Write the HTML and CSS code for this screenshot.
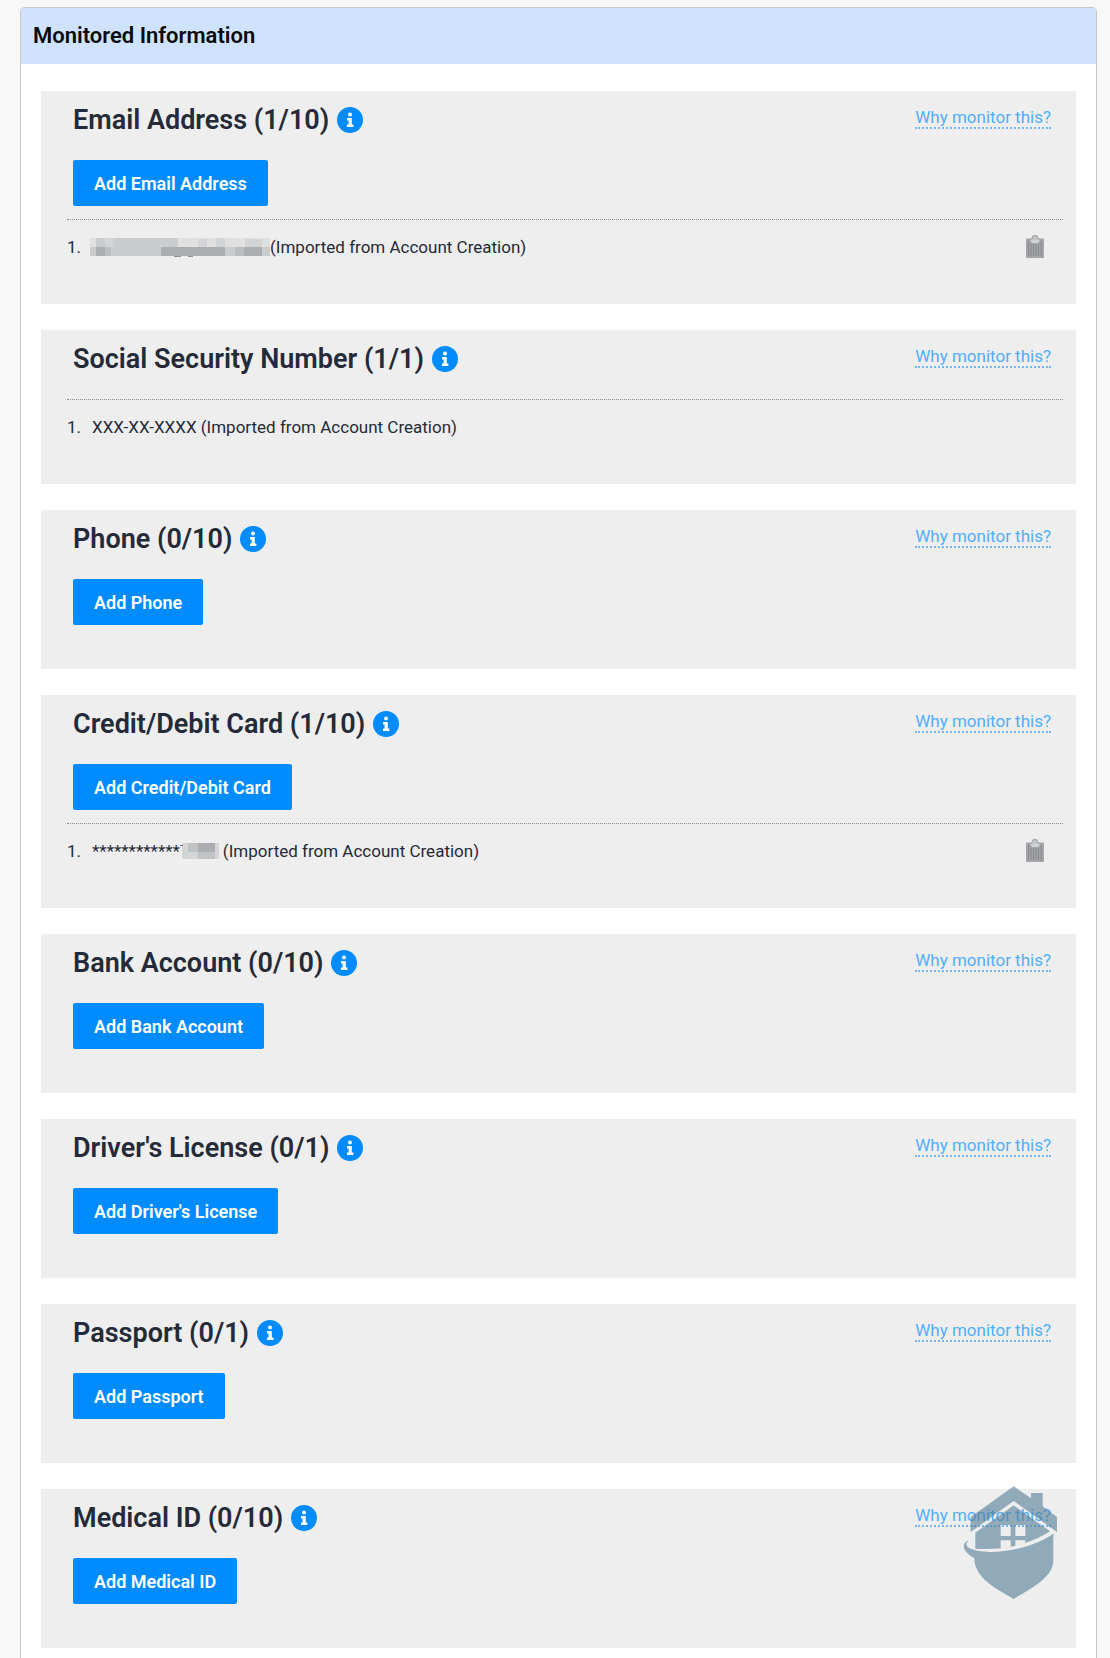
FILE: index.html
```html
<!DOCTYPE html>
<html lang="en">
<head>
    <meta charset="UTF-8">
    <meta name="viewport" content="width=device-width, initial-scale=1.0">
    <title>Monitored Information</title>
    <link rel="stylesheet" href="styles.css">
</head>
<body>
    <svg class="sprite" aria-hidden="true">
        <symbol id="icon-info" viewBox="0 0 26 26">
            <circle cx="13" cy="13" r="13" fill="#008cff"/>
            <circle cx="13" cy="7.6" r="2" fill="#fff"/>
            <path d="M10 11h4.8v6.6h1.6v2.4H10v-2.4h1.6v-4.2H10z" fill="#fff"/>
        </symbol>
        <symbol id="icon-trash" viewBox="0 0 18 24">
            <path d="M1 3.500h16a1 1 0 0 1 1 1V22a1 1 0 0 1-1 1H1a1 1 0 0 1-1-1V4.500a1 1 0 0 1 1-1z" fill="#a3a5a8"/>
            <path d="M2.500 6v15M5 9v12M7.500 9v12M10 9v12M12.500 9v12M15.200 6v15" stroke="#86888c" stroke-width="1"/>
            <path d="M5 5C5 3.500 6.500 3.500 6.500 2.500a2.500 2 0 0 1 5 0c0 1 1.500 1 1.500 2.500" fill="#c4c5c7" stroke="#a9abad" stroke-width="1.500"/>
            <path d="M4.500 5h9v1.500l-2 1.500h-5l-2-1.500z" fill="#d2d3d4"/>
        </symbol>
    </svg>

    <main class="panel">
        <h1 class="panel-title">Monitored Information</h1>
        <div class="panel-body">
            <section class="card">
                <div class="card-head">
                    <h2>Email Address (1/10)</h2>
                    <button class="info" aria-label="About email address"><svg><use href="#icon-info"/></svg></button>
                    <a href="#" class="why">Why monitor this?</a>
                </div>
                <button class="add">Add Email Address</button>
                <ul class="items">
                    <li>
                        <span class="num">1.</span>
                        <svg class="mask mask-email" viewBox="0 0 180 21" aria-hidden="true">
                            <path d="M0 1h180v18H0z" fill="#e0e0e1"/>
                            <path d="M6 1h9v9H6zM24 1h64v18H24zM0 10h24v9H0zM135 10h45v9h-45z" fill="#cbccce"/>
                            <path d="M15 1h9v9h-9zM108 2h9v8h-9zM126 1h9v9h-9zM155 2h17v8h-17z" fill="#d3d4d5"/>
                            <path d="M6 10h9v9H6zM71 10h64v9H71zM154 10h18v9h-18z" fill="#abadb0"/>
                            <path d="M15 10h6v9h-6zM145 10h9v9h-9z" fill="#bbbdbf"/>
                            <path d="M84 19h7v1h-7zM98 19h5v1h-5z" fill="#8d9095"/>
                        </svg>
                        <span>(Imported from Account Creation)</span>
                        <button class="trash" aria-label="Remove"><svg><use href="#icon-trash"/></svg></button>
                    </li>
                </ul>
            </section>

            <section class="card">
                <div class="card-head">
                    <h2>Social Security Number (1/1)</h2>
                    <button class="info" aria-label="About social security number"><svg><use href="#icon-info"/></svg></button>
                    <a href="#" class="why">Why monitor this?</a>
                </div>
                <ul class="items">
                    <li>
                        <span class="num">1.</span>
                        <span>XXX-XX-XXXX (Imported from Account Creation)</span>
                    </li>
                </ul>
            </section>

            <section class="card">
                <div class="card-head">
                    <h2>Phone (0/10)</h2>
                    <button class="info" aria-label="About phone"><svg><use href="#icon-info"/></svg></button>
                    <a href="#" class="why">Why monitor this?</a>
                </div>
                <button class="add">Add Phone</button>
            </section>

            <section class="card">
                <div class="card-head">
                    <h2>Credit/Debit Card (1/10)</h2>
                    <button class="info" aria-label="About credit or debit card"><svg><use href="#icon-info"/></svg></button>
                    <a href="#" class="why">Why monitor this?</a>
                </div>
                <button class="add">Add Credit/Debit Card</button>
                <ul class="items">
                    <li>
                        <span class="num">1.</span>
                        <span>************</span>
                        <svg class="mask mask-card" viewBox="0 0 40 20" aria-hidden="true">
                            <path d="M2 2h37v16H2z" fill="#d4d5d6"/>
                            <path d="M8 2h10v9H8zM18 11h17v7H18z" fill="#c1c2c4"/>
                            <path d="M18 2h17v9H18z" fill="#acadb0"/>
                            <path d="M0 4h3v1H0z" fill="#666a72"/>
                        </svg>
                        <span>(Imported from Account Creation)</span>
                        <button class="trash" aria-label="Remove"><svg><use href="#icon-trash"/></svg></button>
                    </li>
                </ul>
            </section>

            <section class="card">
                <div class="card-head">
                    <h2>Bank Account (0/10)</h2>
                    <button class="info" aria-label="About bank account"><svg><use href="#icon-info"/></svg></button>
                    <a href="#" class="why">Why monitor this?</a>
                </div>
                <button class="add">Add Bank Account</button>
            </section>

            <section class="card">
                <div class="card-head">
                    <h2>Driver's License (0/1)</h2>
                    <button class="info" aria-label="About driver's license"><svg><use href="#icon-info"/></svg></button>
                    <a href="#" class="why">Why monitor this?</a>
                </div>
                <button class="add">Add Driver's License</button>
            </section>

            <section class="card">
                <div class="card-head">
                    <h2>Passport (0/1)</h2>
                    <button class="info" aria-label="About passport"><svg><use href="#icon-info"/></svg></button>
                    <a href="#" class="why">Why monitor this?</a>
                </div>
                <button class="add">Add Passport</button>
            </section>

            <section class="card">
                <div class="card-head">
                    <h2>Medical ID (0/10)</h2>
                    <button class="info" aria-label="About medical ID"><svg><use href="#icon-info"/></svg></button>
                    <a href="#" class="why">Why monitor this?</a>
                </div>
                <button class="add">Add Medical ID</button>
                <svg class="watermark" viewBox="70 48 282 339" aria-hidden="true">
                    <path d="M222 49L274 85V69H309V109L352 141V186L222 93L93 186V141Z"/>
                    <path fill-rule="evenodd" d="M222 106L331 184C300 204 262 220 225 228C190 236 150 239 107 236V188ZM183 165V198H213V165ZM227 165V198H257V165ZM183 211V235L213 231V211ZM227 211V228L257 219V211Z"/>
                    <path d="M88 210C68 228 86 243 150 246C225 246 300 220 341 191V270C341 325 270 357 222 387C172 357 104 325 104 264C72 248 60 222 88 210Z"/>
                </svg>
            </section>
        </div>
    </main>
</body>
</html>
```

FILE: styles.css
```css
* {
    box-sizing: border-box;
}

body {
    margin: 0;
    padding: 7px 13px 0 20px;
    background: #f8f8f8;
    color: #252a38;
    font-family: Roboto, sans-serif;
    font-size: 17px;
}

h1, h2, ul {
    margin: 0;
    padding: 0;
}

button {
    border: none;
    padding: 0;
    font-family: inherit;
    cursor: pointer;
}

.sprite {
    display: none;
}

.panel {
    background: #fff;
    border: 1px solid #c8c8c8;
    border-bottom: none;
    border-radius: 5px 5px 0 0;
    overflow: hidden;
}

.panel-title {
    padding: 0 12px;
    background: #cfe3ff;
    color: #0a0a0a;
    font-size: 22px;
    font-weight: 600;
    line-height: 56px;
}

.panel-body {
    display: flex;
    flex-direction: column;
    gap: 26px;
    padding: 27px 20px 12px;
}

.card {
    position: relative;
    padding: 13px 13px 44px 26px;
    background: #eee;
}

.card-head {
    display: flex;
    align-items: center;
    gap: 8px;
    height: 32px;
    padding-left: 6px;
}

.card-head h2 {
    font-size: 27px;
    font-weight: 600;
    line-height: 32px;
}

.info {
    width: 26px;
    height: 26px;
    border-radius: 50%;
    background: none;
}

.info svg, .trash svg {
    display: block;
    width: 100%;
    height: 100%;
}

.why {
    align-self: flex-start;
    margin-left: auto;
    margin-right: 12px;
    padding-top: 3px;
    border-bottom: 2px dotted #6cbafb;
    color: #50aefc;
    line-height: 20px;
    text-decoration: none;
}

.add {
    display: block;
    height: 46px;
    margin: 24px 0 0 6px;
    padding: 0 21px;
    border-radius: 2px;
    background: #008cff;
    color: #fff;
    font-size: 18px;
    font-weight: 600;
}

.add:hover {
    background: #0079dd;
}

.items {
    margin-top: 24px;
    border-top: 1px dotted #8a8a8a;
    list-style: none;
}

.add + .items {
    margin-top: 13px;
}

.items li {
    display: flex;
    align-items: center;
    height: 40px;
    padding-top: 14px;
    line-height: 26px;
}

.num {
    width: 25px;
}

.mask {
    display: block;
}

.mask-email {
    width: 180px;
    height: 21px;
    margin-left: -2px;
}

.mask-card {
    width: 40px;
    height: 20px;
    margin-right: 3px;
}

.trash {
    width: 18px;
    height: 24px;
    margin-left: auto;
    margin-right: 19px;
    background: none;
}

/* brand mark over the last card */
.watermark {
    position: absolute;
    top: -3px;
    right: 19px;
    width: 94px;
    height: 113px;
    fill: #557d97;
    opacity: 0.6;
    pointer-events: none;
}
```
